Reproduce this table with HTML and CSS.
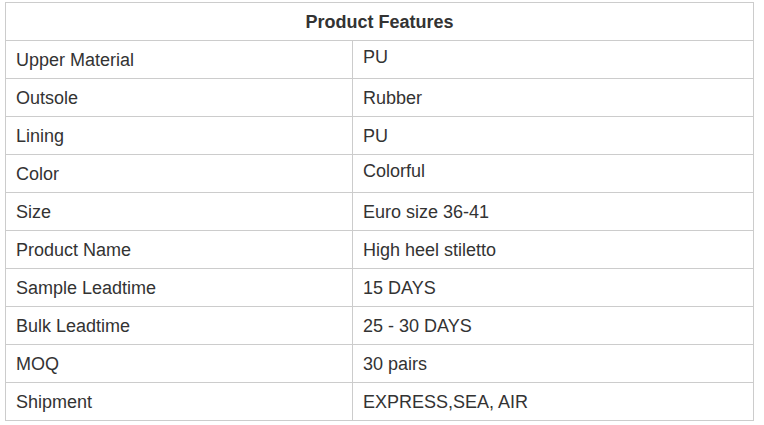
FILE: index.html
```html
<!DOCTYPE html>
<html lang="en">
<head>
<meta charset="utf-8">
<title>Product Features</title>
<link rel="stylesheet" href="styles.css">
</head>
<body>
<table class="features">
  <colgroup>
    <col class="col-label">
    <col class="col-value">
  </colgroup>
  <thead>
    <tr><th colspan="2">Product Features</th></tr>
  </thead>
  <tbody>
    <tr><td>Upper Material</td><td class="raised">PU</td></tr>
    <tr><td>Outsole</td><td>Rubber</td></tr>
    <tr><td>Lining</td><td>PU</td></tr>
    <tr><td>Color</td><td class="raised">Colorful</td></tr>
    <tr><td>Size</td><td>Euro size 36-41</td></tr>
    <tr><td>Product Name</td><td>High heel stiletto</td></tr>
    <tr><td>Sample Leadtime</td><td>15 DAYS</td></tr>
    <tr><td>Bulk Leadtime</td><td>25 - 30 DAYS</td></tr>
    <tr><td>MOQ</td><td>30 pairs</td></tr>
    <tr><td>Shipment</td><td>EXPRESS,SEA, AIR</td></tr>
  </tbody>
</table>
</body>
</html>
```

FILE: styles.css
```css
html, body {
  margin: 0;
  padding: 0;
  background: #ffffff;
}

body {
  padding: 2px 0 0 5px;
  font-family: "Liberation Sans", Arial, sans-serif;
  font-size: 18px;
  color: #333333;
}

.features {
  border-collapse: collapse;
  width: 749px;
  table-layout: fixed;
}

.col-label {
  width: 347px;
}

.features th,
.features td {
  border: 1px solid #cccccc;
  height: 38px;
  padding: 0 10px;
  box-sizing: border-box;
  vertical-align: middle;
  line-height: 20px;
  text-align: left;
}

.features th {
  text-align: center;
  font-weight: bold;
}

.features .raised {
  padding-bottom: 6px;
}
```
